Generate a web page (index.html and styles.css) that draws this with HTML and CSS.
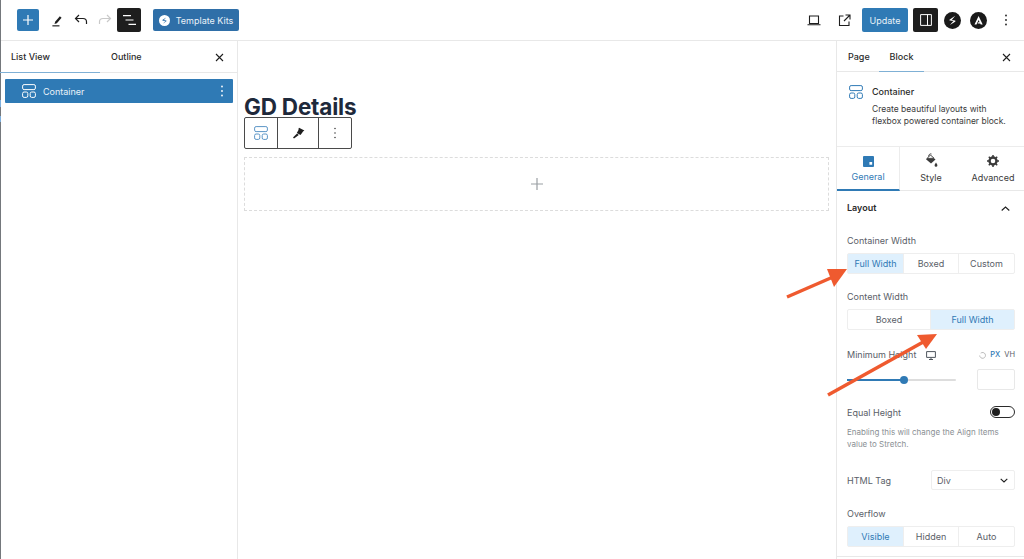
FILE: index.html
```html
<!DOCTYPE html>
<html lang="en">
<head>
  <meta charset="UTF-8" />
  <title>GD Details</title>
  <link rel="stylesheet" href="styles.css">
</head>
<body>
  <div class="app">
    <header class="topbar">
      <div class="topbar-left">
        <button class="add-btn"><svg width="12" height="12" viewBox="0 0 12 12"><path d="M6 1v10M1 6h10" stroke="#fff" stroke-width="1.2"/></svg></button>
        <svg class="tool pen" width="11" height="13" viewBox="0 0 14 16"><path d="M4 9.5 10 2.500l2.200 1.900-6 7-3 1z" fill="#1e1e1e"/><path d="M.5 14.800h9" stroke="#1e1e1e" stroke-width="1.500"/></svg>
        <svg class="tool undo" width="14" height="12" viewBox="0 0 14 12"><path d="M5 1 1.500 4.500 5 8M1.500 4.500H9c2.200 0 3.500 1.400 3.500 3.200V10" fill="none" stroke="#1e1e1e" stroke-width="1.200"/></svg>
        <svg class="tool redo" width="14" height="12" viewBox="0 0 14 12"><path d="M9 1l3.500 3.500L9 8M12.500 4.500H5C2.800 4.500 1.500 5.900 1.500 7.700V10" fill="none" stroke="#c9c9c9" stroke-width="1.200"/></svg>
        <button class="black-btn list-btn"><svg width="13" height="10" viewBox="0 0 13 10"><path d="M0 .7h8M2.500 5h8M5.500 9.300h7.500" stroke="#fff" stroke-width="1.200"/></svg></button>
        <button class="kits-btn">
          <svg width="11" height="11" viewBox="0 0 12 12"><circle cx="6" cy="6" r="6" fill="#fff"/><path d="M7.800 2.600 4 5.200c-.5.400-.3.900.2 1l2.700.4-2.600 2.900L8 6.900c.5-.4.300-.9-.2-1L5.400 5.500z" fill="#2f6fa8"/></svg>
          Template Kits
        </button>
      </div>
      <div class="topbar-right">
        <svg class="laptop" width="14" height="11" viewBox="0 0 14 11"><path d="M2.500 1h9v7.500h-9zM.5 9.800h13" fill="none" stroke="#1e1e1e" stroke-width="1.100"/></svg>
        <svg class="external" width="13" height="13" viewBox="0 0 13 13"><path d="M5.500 2H1.500v9.500H11V7.500M7.500 1H12v4.500M12 1 6 7" fill="none" stroke="#1e1e1e" stroke-width="1.100"/></svg>
        <button class="update-btn">Update</button>
        <button class="black-btn panel-btn"><svg width="12" height="12" viewBox="0 0 12 12"><path d="M.6.6h10.800v10.800H.6zM7.500.6v10.800" fill="none" stroke="#fff"/></svg></button>
        <svg class="logo spectra" width="17" height="17" viewBox="0 0 17 17"><circle cx="8.500" cy="8.500" r="8.500" fill="#1a1a1a"/><path d="M11.200 3.800 5.800 7.400c-.6.500-.4 1 .2 1.100l3.400.4-3.500 4 5.200-3.200c.7-.5.500-1.100-.2-1.200L7.800 8z" fill="#fff"/></svg>
        <svg class="logo astra" width="17" height="17" viewBox="0 0 17 17"><circle cx="8.500" cy="8.500" r="8.500" fill="#1a1a1a"/><path d="M8.600 4 4.500 12.500h2L8.600 8l1 2.200H8.300l-.7 1.300h2.600l.5 1h2z" fill="#fff"/></svg>
        <svg class="dots" width="4" height="12" viewBox="0 0 4 12"><circle cx="2" cy="1.500" r=".9" fill="#1e1e1e"/><circle cx="2" cy="6" r=".9" fill="#1e1e1e"/><circle cx="2" cy="10.500" r=".9" fill="#1e1e1e"/></svg>
      </div>
    </header>

    <div class="workspace">
      <aside class="list-panel">
        <div class="tabs">
          <div class="tab tab-list active">List View</div>
          <div class="tab tab-outline">Outline</div>
          <svg class="close close-left" width="9" height="9" viewBox="0 0 9 9"><path d="M1 1l7 7M8 1 1 8" stroke="#1e1e1e" stroke-width="1.100"/></svg>
        </div>
        <div class="tree-row">
          <svg class="block-icon" width="14" height="14" viewBox="0 0 14 14"><rect x=".6" y=".6" width="12.800" height="5" rx="1.500" fill="none" stroke="#fff"/><rect x=".6" y="8" width="5.200" height="5.400" rx="1.500" fill="none" stroke="#fff"/><rect x="8.200" y="8" width="5.200" height="5.400" rx="1.500" fill="none" stroke="#fff"/></svg>
          <span>Container</span>
          <svg class="dots row-dots" width="4" height="12" viewBox="0 0 4 12"><circle cx="2" cy="1.500" r=".9" fill="#fff"/><circle cx="2" cy="6" r=".9" fill="#fff"/><circle cx="2" cy="10.500" r=".9" fill="#fff"/></svg>
        </div>
      </aside>

      <main class="canvas">
        <h1 class="page-title">GD Details</h1>
        <div class="block-toolbar">
          <div class="tb-cell tb-first"><svg width="14" height="14" viewBox="0 0 14 14"><rect x=".6" y=".6" width="12.800" height="5" rx="1.500" fill="none" stroke="#5b95c6"/><rect x=".6" y="8" width="5.200" height="5.400" rx="1.500" fill="none" stroke="#5b95c6"/><rect x="8.200" y="8" width="5.200" height="5.400" rx="1.500" fill="none" stroke="#5b95c6"/></svg></div>
          <div class="tb-cell tb-second"><svg width="13" height="12" viewBox="0 0 13 12"><path d="M7 .8 12.400 3.500 11 4.500 10 6 8.500 8 4.800 6 6.500 3 6.600 1.500z" fill="#1e1e1e"/><path d="M5 6.500 1 10.500l1 1 4.800-3.500z" fill="#1e1e1e"/></svg></div>
          <div class="tb-cell tb-third"><svg width="4" height="12" viewBox="0 0 4 12"><circle cx="2" cy="1.500" r=".8" fill="#444"/><circle cx="2" cy="6" r=".8" fill="#444"/><circle cx="2" cy="10.500" r=".8" fill="#444"/></svg></div>
        </div>
        <div class="drop-zone"><svg width="12" height="12" viewBox="0 0 12 12"><path d="M6 0v12M0 6h12" stroke="#9a9fa3" stroke-width="1.200"/></svg></div>
      </main>

      <aside class="settings">
        <div class="tabs tabs-right">
          <div class="tab tab-page">Page</div>
          <div class="tab tab-block active">Block</div>
          <svg class="close close-right" width="9" height="9" viewBox="0 0 9 9"><path d="M1 1l7 7M8 1 1 8" stroke="#1e1e1e" stroke-width="1.100"/></svg>
        </div>
        <div class="block-card">
          <svg class="card-icon" width="14" height="14" viewBox="0 0 14 14"><rect x=".6" y=".6" width="12.800" height="5" rx="1.500" fill="none" stroke="#2f7ab5"/><rect x=".6" y="8" width="5.200" height="5.400" rx="1.500" fill="none" stroke="#2f7ab5"/><rect x="8.200" y="8" width="5.200" height="5.400" rx="1.500" fill="none" stroke="#2f7ab5"/></svg>
          <div>
            <div class="card-title">Container</div>
            <p class="card-desc">Create beautiful layouts with<br>flexbox powered container block.</p>
          </div>
        </div>
        <div class="inspector-tabs">
          <div class="itab itab-active">
            <svg width="11" height="11" viewBox="0 0 12 12"><path d="M1 0h10a1 1 0 0 1 1 1v10a1 1 0 0 1-1 1H1a1 1 0 0 1-1-1V1a1 1 0 0 1 1-1zm6 6.500v3h3v-3z" fill="#2f7ab5" fill-rule="evenodd"/></svg>
            <span>General</span>
          </div>
          <div class="itab itab-style">
            <svg width="13" height="15" viewBox="0 0 13 15"><path d="M5.500 2 10.500 6.500 6 10.500 1 6.300z" fill="#3a3a3a"/><path d="M2 5.500 5.500 2 9 5.200z" fill="#fff" stroke="#3a3a3a" stroke-width=".8"/><path d="M3.500 3.500C3.800 1 5.500.5 6.500 1" fill="none" stroke="#3a3a3a" stroke-width=".9"/><path d="M11 9.500c.9 1.300 1.400 2.100 1.400 2.900a1.400 1.400 0 0 1-2.800 0c0-.8.500-1.600 1.400-2.900z" fill="#3a3a3a"/></svg>
            <span>Style</span>
          </div>
          <div class="itab itab-adv">
            <svg width="12" height="12" viewBox="0 0 12 12"><circle cx="6" cy="6" r="3.500" fill="none" stroke="#3a3a3a" stroke-width="2.400"/><path d="M6 0v2M6 10v2M0 6h2M10 6h2M1.800 1.800l1.400 1.400M8.800 8.800l1.400 1.400M10.200 1.800 8.800 3.200M3.200 8.800l-1.400 1.400" stroke="#3a3a3a" stroke-width="1.500"/></svg>
            <span>Advanced</span>
          </div>
        </div>
        <div class="section">
          <div class="section-head">
            <span>Layout</span>
            <svg width="9" height="5" viewBox="0 0 9 5"><path d="M.7 4.500 4.500 1l3.800 3.500" fill="none" stroke="#1e1e1e" stroke-width="1.100"/></svg>
          </div>

          <div class="field-label">Container Width</div>
          <div class="seg seg-3">
            <div class="seg-item on">Full Width</div>
            <div class="seg-item">Boxed</div>
            <div class="seg-item">Custom</div>
          </div>

          <div class="field-label">Content Width</div>
          <div class="seg seg-2">
            <div class="seg-item">Boxed</div>
            <div class="seg-item on">Full Width</div>
          </div>

          <div class="min-head">
            <span>Minimum Height</span>
            <svg class="desktop" width="10" height="9" viewBox="0 0 10 9"><path d="M.6.6h8.800v5.800H.6zM3 8.500h4M5 6.500v2" fill="none" stroke="#50575e"/></svg>
            <span class="units">
              <svg width="7" height="7" viewBox="0 0 7 7"><path d="M1.700 1.200A2.900 2.900 0 1 1 .7 3.500" fill="none" stroke="#b5b5b5" stroke-width=".9"/></svg>
              <b>PX</b><span>VH</span>
            </span>
          </div>
          <div class="slider-row">
            <div class="slider"><div class="slider-fill"></div><div class="slider-knob"></div></div>
            <div class="num-input"></div>
          </div>

          <div class="toggle-row">
            <span>Equal Height</span>
            <div class="toggle"><div class="toggle-knob"></div></div>
          </div>
          <p class="help">Enabling this will change the Align Items value to Stretch.</p>

          <div class="select-row">
            <span>HTML Tag</span>
            <div class="select">Div<svg width="8" height="5" viewBox="0 0 8 5"><path d="M.7.8 4 4 7.300.8" fill="none" stroke="#1e1e1e" stroke-width="1.100"/></svg></div>
          </div>

          <div class="field-label overflow-label">Overflow</div>
          <div class="seg seg-3">
            <div class="seg-item on">Visible</div>
            <div class="seg-item">Hidden</div>
            <div class="seg-item">Auto</div>
          </div>
        </div>
      </aside>
    </div>

    <!-- annotation arrows drawn over the screenshot -->
    <svg class="arrows" width="1024" height="559" viewBox="0 0 1024 559">
      <path d="M787 297 833 277" stroke="#ef5a2f" stroke-width="3.500"/>
      <path d="M847 269 827 269 834 287z" fill="#ef5a2f"/>
      <path d="M828 395 925 341" stroke="#ef5a2f" stroke-width="3.500"/>
      <path d="M937 334 917 335 926 349z" fill="#ef5a2f"/>
    </svg>
  </div>
</body>
</html>
```

FILE: styles.css
```css
* {
  box-sizing: border-box;
}

html, body {
  margin: 0;
  height: 100%;
  overflow: hidden;
}

body {
  font-family: Inter, "Liberation Sans", sans-serif;
  font-size: 9px;
  color: #2b2b2b;
  background: #fff;
}

button {
  font-family: inherit;
  border: none;
  padding: 0;
  display: flex;
  align-items: center;
  justify-content: center;
}

.app {
  position: relative;
  width: 1024px;
  height: 559px;
  display: flex;
  flex-direction: column;
}

/* thin window edge, with two blue nicks in it */
.app::before {
  content: "";
  position: absolute;
  left: 0;
  top: 0;
  width: 1px;
  height: 559px;
  background: linear-gradient(#74787c 0 100px, #7fb0de 100px 107px, #74787c 107px 116px, #7fb0de 116px 122px, #74787c 122px);
}

.topbar {
  height: 41px;
  flex: none;
  display: flex;
  justify-content: space-between;
  align-items: center;
  border-bottom: 1px solid #e8e8e8;
}

.topbar-left, .topbar-right {
  display: flex;
  align-items: center;
}

.topbar-left {
  padding-left: 17px;
}

.add-btn {
  width: 22px;
  height: 22px;
  background: #2f7ab5;
  border-radius: 2px;
}

.pen { margin-left: 13px; }
.undo { margin-left: 11px; }
.redo { margin-left: 10px; }

.black-btn {
  width: 25px;
  height: 24px;
  background: #1e1e1e;
  border-radius: 2px;
}

.list-btn {
  margin-left: 5px;
  width: 24px;
}

.kits-btn {
  margin-left: 12px;
  width: 86px;
  height: 22px;
  gap: 6px;
  background: #2f6fa8;
  color: #eaf2f8;
  font-size: 9px;
  border-radius: 2px;
}

.topbar-right {
  padding-right: 16px;
}

.external { margin-left: 17px; }

.update-btn {
  margin-left: 11px;
  width: 46px;
  height: 24px;
  background: #2f7ab5;
  color: #eaf2f8;
  font-size: 9px;
  border-radius: 2px;
}

.panel-btn { margin-left: 5px; }
.spectra { margin-left: 6px; }
.astra { margin-left: 9px; }
.topbar-right > .dots { margin-left: 17px; }

.workspace {
  flex: 1;
  display: flex;
  min-height: 0;
}

.list-panel {
  width: 238px;
  flex: none;
  border-right: 1px solid #e8e8e8;
}

.tabs {
  position: relative;
  height: 32px;
  display: flex;
  border-bottom: 1px solid #e8e8e8;
  font-weight: 500;
}

.tab {
  display: flex;
  align-items: center;
}

.tab.active {
  border-bottom: 1.500px solid #7fb0d5;
  margin-bottom: -1px;
}

.tab-list {
  width: 100px;
  padding-left: 11px;
}

.tab-outline {
  padding-left: 11px;
}

.close {
  position: absolute;
  top: 12px;
}

.close-left { left: 215px; }
.close-right { left: 165px; }

.tree-row {
  margin: 6px 4px 0 5px;
  height: 24px;
  background: #2f7ab5;
  color: #eaf2f8;
  border-radius: 1px;
  display: flex;
  align-items: center;
  padding-left: 17px;
}

.tree-row span {
  margin-left: 7px;
  flex: 1;
}

.row-dots {
  margin-right: 9px;
}

.canvas {
  flex: 1;
  padding: 52px 7px 0 6px;
  min-width: 0;
}

.page-title {
  margin: 0;
  height: 24px;
  line-height: 27px;
  font-size: 22.500px;
  font-weight: 700;
  letter-spacing: -.2px;
  color: #1e293b;
}

.block-toolbar {
  display: flex;
  width: 108px;
  height: 32px;
  background: #fff;
  border: 1px solid #4a4a4a;
  border-radius: 2px;
}

.tb-cell {
  display: flex;
  align-items: center;
  justify-content: center;
  border-right: 1px solid #4a4a4a;
}

.tb-first { width: 33px; }
.tb-second { width: 41px; }
.tb-third { flex: 1; border-right: none; }

.drop-zone {
  margin-top: 8px;
  height: 54px;
  border: 1px dashed #dcdcdc;
  display: flex;
  align-items: center;
  justify-content: center;
}

.settings {
  width: 188px;
  flex: none;
  border-left: 1px solid #e8e8e8;
  overflow: hidden;
}

.tabs-right {
  height: 31px;
}

.tab-page {
  width: 42px;
  padding-left: 11px;
}

.tab-block {
  width: 45px;
  justify-content: center;
}

.block-card {
  height: 75px;
  display: flex;
  padding: 13px 10px 0 12px;
  gap: 9px;
  border-bottom: 1px solid #ececec;
}

.card-icon {
  flex: none;
}

.card-title {
  margin-top: 1px;
  font-weight: 500;
  line-height: 12px;
}

.card-desc {
  margin: 5px 0 0;
  font-size: 8.500px;
  line-height: 12px;
  white-space: nowrap;
  color: #3a3a3a;
}

.inspector-tabs {
  height: 44px;
  display: flex;
  border-bottom: 1px solid #e8e8e8;
}

.itab {
  flex: 1;
  display: flex;
  flex-direction: column;
  align-items: center;
  padding-top: 8px;
  gap: 5px;
  color: #3a3a3a;
}

.itab-style {
  padding-top: 6px;
  gap: 4px;
}

.itab-active {
  flex: none;
  width: 63px;
  padding-top: 9px;
  gap: 4px;
  color: #2f7ab5;
  border-right: 1px solid #ececec;
  border-bottom: 2px solid #2f7ab5;
  height: 44px;
}

.section {
  height: 366px;
  padding: 11px 9px 0 10px;
  color: #5a6068;
  border-bottom: 1px solid #e8e8e8;
}

.section-head {
  display: flex;
  justify-content: space-between;
  align-items: center;
  font-weight: 600;
  color: #2b2b2b;
  line-height: 12px;
  padding-right: 5px;
}

.field-label {
  margin-top: 21px;
  line-height: 12px;
}

.seg {
  margin-top: 6px;
  height: 21px;
  display: grid;
  border: 1px solid #eeeeee;
  border-radius: 2px;
}

.seg + .field-label {
  margin-top: 17px;
}

.seg-3 {
  grid-template-columns: 56px 55px 1fr;
}

.seg-2 {
  grid-template-columns: 83px 1fr;
}

.seg-item {
  display: flex;
  align-items: center;
  justify-content: center;
  border-right: 1px solid #eeeeee;
}

.seg-item:last-child {
  border-right: none;
}

.seg-item.on {
  background: #dff0fd;
  color: #2f7ab5;
}

.min-head {
  margin-top: 19px;
  display: flex;
  align-items: center;
  line-height: 12px;
}

.desktop {
  margin-left: 10px;
}

.units {
  margin-left: auto;
  display: flex;
  align-items: center;
  gap: 4px;
  font-size: 7.500px;
}

.units b {
  font-weight: 500;
  color: #2f7ab5;
}

.slider-row {
  margin-top: 8px;
  height: 21px;
  display: flex;
  align-items: center;
  justify-content: space-between;
}

.slider {
  position: relative;
  width: 109px;
  height: 2px;
  background: #dddddd;
  border-radius: 1px;
}

.slider-fill {
  width: 57px;
  height: 2px;
  background: #2f7ab5;
}

.slider-knob {
  position: absolute;
  left: 53px;
  top: -3px;
  width: 8px;
  height: 8px;
  border-radius: 50%;
  background: #2f7ab5;
}

.num-input {
  width: 38px;
  height: 21px;
  border: 1px solid #e8e8e8;
  border-radius: 2px;
}

.toggle-row {
  margin-top: 16px;
  display: flex;
  justify-content: space-between;
  align-items: center;
  height: 12px;
}

.toggle {
  width: 25px;
  height: 12px;
  border: 1px solid #2b2b2b;
  border-radius: 6px;
  padding: 1px;
}

.toggle-knob {
  width: 8px;
  height: 8px;
  border-radius: 50%;
  background: #1e1e1e;
}

.help {
  margin: 8px 0 0;
  font-size: 8px;
  line-height: 12px;
  color: #8a8f94;
}

.select-row {
  margin-top: 20px;
  display: flex;
  justify-content: space-between;
  align-items: center;
  height: 20px;
}

.select {
  width: 84px;
  height: 20px;
  border: 1px solid #eeeeee;
  border-radius: 2px;
  display: flex;
  align-items: center;
  justify-content: space-between;
  padding: 0 6px 0 5px;
}

.overflow-label {
  margin-top: 18px;
}

.arrows {
  position: absolute;
  left: 0;
  top: 0;
  pointer-events: none;
}
```
